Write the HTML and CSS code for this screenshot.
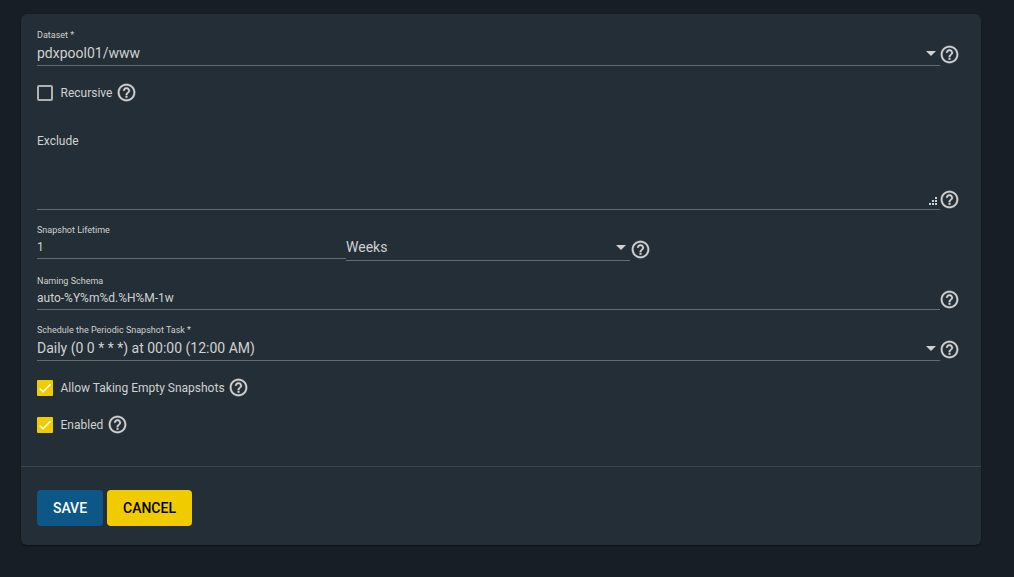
FILE: index.html
```html
<!DOCTYPE html>
<html lang="en">
<head>
<meta charset="utf-8">
<title>Periodic Snapshot Task</title>
<link rel="stylesheet" href="styles.css">
</head>
<body>
<svg width="0" height="0" class="defs">
  <symbol id="help" viewBox="0 0 24 24"><path d="M11 18h2v-2h-2v2zm1-16C6.480 2 2 6.480 2 12s4.480 10 10 10 10-4.480 10-10S17.520 2 12 2zm0 18c-4.410 0-8-3.590-8-8s3.590-8 8-8 8 3.590 8 8-3.590 8-8 8zm0-14c-2.210 0-4 1.790-4 4h2c0-1.100.9-2 2-2s2 .9 2 2c0 2-3 1.750-3 5h2c0-2.250 3-2.500 3-5 0-2.210-1.790-4-4-4z"/></symbol>
  <symbol id="tick" viewBox="0 0 24 24"><path d="M4.100 12.700 9 17.600 20.300 6.300" fill="none" stroke="#fff" stroke-width="2.300"/></symbol>
</svg>
<form class="card">
  <div class="row dataset">
    <div class="field">
      <label class="label">Dataset *</label>
      <div class="value">pdxpool01/www</div>
      <i class="arrow"></i>
    </div>
    <svg class="help"><use href="#help"/></svg>
  </div>
  <div class="check recursive">
    <span class="box"></span><span class="caption">Recursive</span><svg class="help"><use href="#help"/></svg>
  </div>
  <div class="row exclude">
    <div class="field">
      <div class="placeholder">Exclude</div>
      <svg class="grip" viewBox="0 0 8 8"><path d="M6 0h2v2H6zM3 3h2v2H3zM6 3h2v2H6zM0 6h2v2H0zM3 6h2v2H3zM6 6h2v2H6z"/></svg>
    </div>
    <svg class="help"><use href="#help"/></svg>
  </div>
  <div class="row lifetime">
    <div class="field count">
      <label class="label">Snapshot Lifetime</label>
      <div class="value small">1</div>
    </div>
    <div class="field unit">
      <div class="value">Weeks</div>
      <i class="arrow"></i>
    </div>
    <svg class="help"><use href="#help"/></svg>
  </div>
  <div class="row naming">
    <div class="field">
      <label class="label">Naming Schema</label>
      <div class="value small">auto-%Y%m%d.%H%M-1w</div>
    </div>
    <svg class="help"><use href="#help"/></svg>
  </div>
  <div class="row schedule">
    <div class="field">
      <label class="label">Schedule the Periodic Snapshot Task *</label>
      <div class="value">Daily (0 0 * * *) at 00:00 (12:00 AM)</div>
      <i class="arrow"></i>
    </div>
    <svg class="help"><use href="#help"/></svg>
  </div>
  <div class="check allow">
    <span class="box on"><svg><use href="#tick"/></svg></span><span class="caption">Allow Taking Empty Snapshots</span><svg class="help"><use href="#help"/></svg>
  </div>
  <div class="check enabled">
    <span class="box on"><svg><use href="#tick"/></svg></span><span class="caption">Enabled</span><svg class="help"><use href="#help"/></svg>
  </div>
  <div class="actions">
    <button type="button" class="btn save">SAVE</button>
    <button type="button" class="btn cancel">CANCEL</button>
  </div>
</form>
</body>
</html>
```

FILE: styles.css
```css
* { box-sizing: border-box; }
body {
  margin: 0;
  padding: 14px 33px 0 21px;
  height: 577px;
  overflow: hidden;
  background: #181e26;
  color: #d0d1d2;
  font-family: Roboto, "Liberation Sans", sans-serif;
}
.defs { position: absolute; }
.card {
  height: 531px;
  border-radius: 6px;
  background: #242e36;
  box-shadow: 0 1px 2px rgba(0, 0, 0, .5);
}
.row {
  display: flex;
  align-items: flex-end;
  padding-left: 16px;
}
.field {
  position: relative;
  width: 903px;
  height: 100%;
  border-bottom: 1px solid #636a70;
  white-space: nowrap;
}
.label { display: block; font-size: 9px; line-height: 12px; }
.value { font-size: 14px; line-height: 20px; }
.value.small { font-size: 12px; }
.placeholder { font-size: 12px; line-height: 20px; }
.help {
  display: block;
  flex: none;
  width: 21px;
  height: 21px;
  margin-left: -1px;
  fill: #d0d1d2;
  stroke: #d0d1d2;
  stroke-width: .3px;
}
.arrow {
  position: absolute;
  right: 4px;
  bottom: 9px;
  border: 5px solid transparent;
  border-top-color: #d0d1d2;
  border-bottom: 0;
}
.dataset { height: 52px; }
.dataset .field { padding-top: 15px; }
.dataset .value { margin-top: 2px; }
.dataset .help { margin-bottom: 1.500px; }
.exclude { height: 90px; }
.exclude .field { padding-top: 11px; }
.exclude .help { margin-bottom: .500px; }
.grip { position: absolute; right: 3px; bottom: 4px; width: 8px; height: 8px; fill: #d0d1d2; }
.lifetime { height: 51px; }
.lifetime .count { width: 309px; height: 49px; align-self: flex-start; padding-top: 14px; }
.lifetime .count .value { margin-top: 1px; }
.lifetime .unit { width: 284px; padding-top: 27px; }
.lifetime .arrow { bottom: 10px; }
.lifetime .help { margin: 0 0 1.500px -.500px; }
.naming { height: 49px; }
.naming .field { padding-top: 14px; }
.naming .small { margin-top: 1px; }
.naming .help { margin-bottom: .500px; }
.schedule { height: 51px; }
.schedule .field { padding-top: 14px; }
.schedule .value { margin-top: 2px; }
.schedule .help { margin-bottom: 1.500px; }
.check { display: flex; align-items: center; padding-left: 16px; font-size: 12px; }
.check .help { margin: -1px 0 0 3.500px; }
.recursive { height: 54px; }
.allow { height: 38px; margin-top: 8px; }
.enabled { height: 36px; }
.box { width: 16px; height: 16px; margin-right: 7.500px; border: 2px solid #b0b1b2; border-radius: 2px; }
.box.on { border: 0; border-radius: 1px; background: #f0cb00; }
.box svg { display: block; width: 16px; height: 16px; }
.actions {
  display: flex;
  gap: 4px;
  margin-top: 23px;
  padding: 23px 16px 0;
  border-top: 1px solid #39434a;
}
.btn {
  height: 36px;
  padding: 0;
  border: 0;
  border-radius: 4px;
  font: 500 14px/36px Roboto, "Liberation Sans", sans-serif;
}
.save { width: 66px; background: #0d5788; color: #fff; }
.cancel { width: 85px; background: #f0cb00; color: #000; }
```
